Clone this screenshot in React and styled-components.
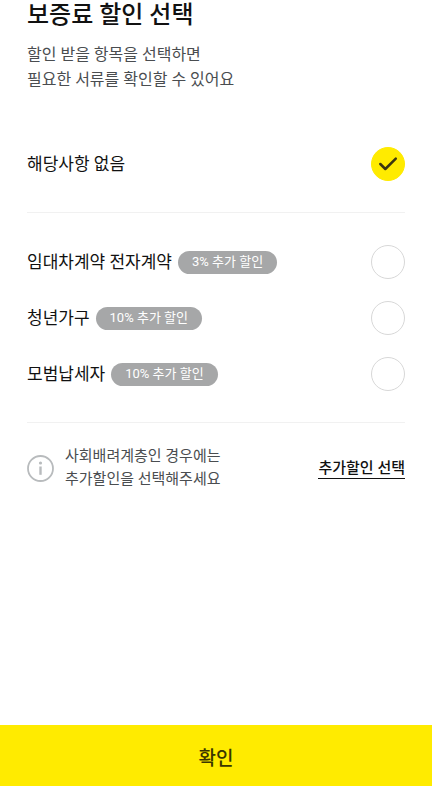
import React, { useState } from 'react';
import styled, { createGlobalStyle } from 'styled-components';

const GlobalStyle = createGlobalStyle`
  *, *::before, *::after { box-sizing: border-box; }
  body {
    margin: 0;
    background: #ffffff;
    color: #111111;
    font-family: Roboto, "Noto Sans CJK KR", sans-serif;
  }
  h1, p, fieldset { margin: 0; padding: 0; border: 0; }
  button { font-family: inherit; }
`;

const Screen = styled.div`
  display: flex;
  flex-direction: column;
  min-height: 100vh;
`;

const Content = styled.main`
  flex: 1;
  padding: 0 27px;
`;

const Title = styled.h1`
  font-size: 24px;
  line-height: 31px;
  font-weight: 500;
`;

const Lead = styled.p`
  margin-top: 11px;
  font-size: 16px;
  line-height: 25px;
  color: #4a4d50;
`;

const Group = styled.fieldset`
  min-width: 0;
`;

const NoneSection = styled.div`
  margin-top: 44px;
  padding: 0 0 20px;
  border-bottom: 1px solid #f1f1f1;
`;

const DiscountSection = styled.div`
  padding: 21px 0 20px;
  border-bottom: 1px solid #f1f1f1;
`;

const Option = styled.label`
  display: flex;
  align-items: center;
  gap: 6px;
  height: 56px;
  font-size: 17px;
  line-height: 26px;
  cursor: pointer;
`;

const Tag = styled.span`
  padding: 0 14px 1px;
  border-radius: 12px;
  background: #a6a7a8;
  color: #ffffff;
  font-size: 13px;
  line-height: 22px;
`;

const Radio = styled.input`
  appearance: none;
  flex: none;
  width: 34px;
  height: 34px;
  margin: 0;
  border: 1px solid #d8d8d8;
  border-radius: 50%;
  background: #ffffff;
  cursor: pointer;

  &:checked {
    border-color: #ffeb00;
    background: #ffeb00;
  }
`;

const Control = styled.span`
  display: grid;
  margin-left: auto;

  > * { grid-area: 1 / 1; }
`;

const Check = styled.svg`
  width: 34px;
  height: 34px;
  pointer-events: none;
`;

const Notice = styled.div`
  display: flex;
  align-items: center;
  gap: 11px;
  padding-top: 22px;
`;

const InfoIcon = styled.svg`
  flex: none;
  width: 27px;
  height: 27px;
`;

const NoticeText = styled.p`
  font-size: 15px;
  line-height: 23px;
  color: #4a4d50;
`;

const MoreLink = styled.a`
  margin-left: auto;
  border-bottom: 1px solid #111111;
  color: #111111;
  font-size: 15px;
  line-height: 20px;
  font-weight: 500;
  text-decoration: none;
`;

const Confirm = styled.button`
  height: 61px;
  padding: 7px 0 0;
  border: 0;
  background: #ffeb00;
  color: #3a3600;
  font-size: 19px;
  line-height: 28px;
  font-weight: 500;
  cursor: pointer;
`;

const discounts = [
  { id: 'contract', label: '임대차계약 전자계약', tag: '3% 추가 할인' },
  { id: 'youth', label: '청년가구', tag: '10% 추가 할인' },
  { id: 'taxpayer', label: '모범납세자', tag: '10% 추가 할인' },
];

function DiscountOption({ id, label, tag, selected, onSelect }) {
  const checked = selected === id;
  return (
    <Option>
      <span>{label}</span>
      {tag && <Tag>{tag}</Tag>}
      <Control>
        <Radio type="radio" name="discount" value={id} checked={checked} onChange={() => onSelect(id)} />
        {checked && (
          <Check viewBox="0 0 34 34" aria-hidden="true">
            <path
              d="M9.3 17 L14.3 22 L24.8 11.6"
              fill="none"
              stroke="#3a3610"
              strokeWidth="2.5"
              strokeLinecap="round"
              strokeLinejoin="round"
            />
          </Check>
        )}
      </Control>
    </Option>
  );
}

export default function App() {
  const [selected, setSelected] = useState('none');
  return (
    <Screen>
      <GlobalStyle />
      <Content>
        <Title>보증료 할인 선택</Title>
        <Lead>
          할인 받을 항목을 선택하면
          <br />
          필요한 서류를 확인할 수 있어요
        </Lead>
        <Group aria-label="보증료 할인 선택">
          <NoneSection>
            <DiscountOption id="none" label="해당사항 없음" selected={selected} onSelect={setSelected} />
          </NoneSection>
          <DiscountSection>
            {discounts.map((item) => (
              <DiscountOption key={item.id} {...item} selected={selected} onSelect={setSelected} />
            ))}
          </DiscountSection>
        </Group>
        <Notice>
          <InfoIcon viewBox="0 0 27 27" aria-hidden="true">
            <circle cx="13.5" cy="13.5" r="12.5" fill="none" stroke="#b8bbbd" strokeWidth="1.8" />
            <circle cx="13.5" cy="8" r="1.6" fill="#b8bbbd" />
            <path d="M13.5 11.5 V19.8" stroke="#b8bbbd" strokeWidth="2.4" />
          </InfoIcon>
          <NoticeText>
            사회배려계층인 경우에는
            <br />
            추가할인을 선택해주세요
          </NoticeText>
          <MoreLink href="#more">추가할인 선택</MoreLink>
        </Notice>
      </Content>
      <Confirm type="button">확인</Confirm>
    </Screen>
  );
}
